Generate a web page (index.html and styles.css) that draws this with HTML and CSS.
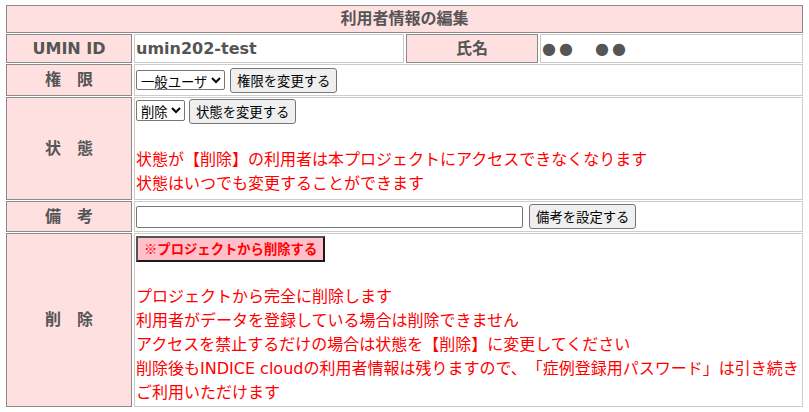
FILE: index.html
```html
<!DOCTYPE html>
<html lang="ja">
<head>
<meta charset="utf-8">
<title>利用者情報の編集</title>
<link rel="stylesheet" href="styles.css">
</head>
<body>
<table class="edit-table">
  <colgroup>
    <col class="c1"><col class="c2"><col class="c3"><col class="c4">
  </colgroup>
  <tr class="row-title">
    <th class="title" colspan="4">利用者情報の編集</th>
  </tr>
  <tr class="row-id">
    <th class="label">UMIN ID</th>
    <td class="value strong">umin202-test</td>
    <th class="label">氏名</th>
    <td class="value strong name">●●　●●</td>
  </tr>
  <tr class="row-role">
    <th class="label">権　限</th>
    <td class="value mid" colspan="3">
      <select class="sel"><option>一般ユーザ</option></select>
      <button class="btn">権限を変更する</button>
    </td>
  </tr>
  <tr class="row-status">
    <th class="label">状　態</th>
    <td class="value" colspan="3">
      <div class="ctrl-line">
        <select class="sel"><option>削除</option></select>
        <button class="btn">状態を変更する</button>
      </div>
      <div class="notes">
        <p class="blank"></p>
        <p>状態が【削除】の利用者は本プロジェクトにアクセスできなくなります</p>
        <p>状態はいつでも変更することができます</p>
      </div>
    </td>
  </tr>
  <tr class="row-memo">
    <th class="label">備　考</th>
    <td class="value mid" colspan="3">
      <input class="memo" type="text">
      <button class="btn">備考を設定する</button>
    </td>
  </tr>
  <tr class="row-delete">
    <th class="label">削　除</th>
    <td class="value" colspan="3">
      <div class="del-line">
        <button class="btn-delete">※プロジェクトから削除する</button>
      </div>
      <div class="notes">
        <p class="blank"></p>
        <p>プロジェクトから完全に削除します</p>
        <p>利用者がデータを登録している場合は削除できません</p>
        <p>アクセスを禁止するだけの場合は状態を【削除】に変更してください</p>
        <p>削除後もINDICE cloudの利用者情報は残りますので、「症例登録用パスワード」は引き続きご利用いただけます</p>
      </div>
    </td>
  </tr>
</table>
</body>
</html>
```

FILE: styles.css
```css
html, body {
  margin: 0;
  padding: 0;
  background: #ffffff;
}

body {
  padding: 4px 0 0 4px;
  font-family: "DejaVu Sans", "Noto Sans CJK JP", sans-serif;
  font-size: 16px;
  line-height: 24px;
  color: #555555;
  text-spacing-trim: space-all;
}

.edit-table {
  border-collapse: separate;
  border-spacing: 2px 1px;
  table-layout: fixed;
  width: 801px;
}

.c1 { width: 126px; }
.c2 { width: 270px; }
.c3 { width: 132px; }
.c4 { width: 263px; }

.row-title { height: 28px; }
.row-id { height: 29px; }
.row-role { height: 32px; }
.row-status { height: 103px; }
.row-memo { height: 31px; }
.row-delete { height: 174px; }

.title,
.label {
  background: #ffe0e0;
  border: 1px solid #8a8a8a;
  padding: 0 1px;
  font-weight: bold;
  color: #555555;
  text-align: center;
  vertical-align: middle;
  white-space: nowrap;
}

.value {
  border: 1px solid #cccccc;
  padding: 1px;
  vertical-align: top;
  text-align: left;
  background: #ffffff;
}

.row-id .value {
  vertical-align: middle;
  padding: 0 1px;
}

.strong {
  font-weight: bold;
  color: #555555;
}

.name {
  padding-left: 3px;
  letter-spacing: 3px;
}

.value.mid {
  vertical-align: middle;
  padding: 0 1px;
}

.ctrl-line {
  height: 25px;
  display: flex;
  align-items: flex-start;
  gap: 4px;
}

.del-line {
  height: 26px;
  padding-top: 1px;
  box-sizing: border-box;
}

.sel {
  font-family: "Noto Sans CJK JP", sans-serif;
  font-size: 13.333px;
  height: 20px;
  padding: 0;
  border: 1px solid #767676;
  border-radius: 2px;
  background: #ffffff;
  color: #000000;
  vertical-align: middle;
  margin: 0;
}

.ctrl-line .sel {
  margin-top: 1px;
  height: 21px;
}

.btn {
  font-family: "Noto Sans CJK JP", sans-serif;
  font-size: 13.333px;
  line-height: 19px;
  height: 25px;
  padding: 0 6px;
  margin: 0;
  border: 1px solid #767676;
  border-radius: 3px;
  background: #efefef;
  color: #000000;
  vertical-align: middle;
}

.memo {
  width: 387px;
  height: 22px;
  box-sizing: border-box;
  border: 1px solid #767676;
  border-radius: 2px;
  padding: 1px 2px;
  margin: 0 1px 0 0;
  vertical-align: middle;
  font-size: 13px;
}

.btn-delete {
  font-family: "Noto Sans CJK JP", sans-serif;
  font-size: 13.333px;
  font-weight: bold;
  line-height: 18px;
  height: 26px;
  padding: 0 6px;
  margin: 0;
  background: #ffc0cb;
  color: #ff0000;
  border: 2px solid;
  border-color: #555555 #1a1a1a #1a1a1a #555555;
  border-radius: 0;
}

.notes p {
  margin: 0;
  color: #ff0000;
  font-size: 16px;
  line-height: 24px;
}

.notes .blank {
  height: 24px;
}
```
